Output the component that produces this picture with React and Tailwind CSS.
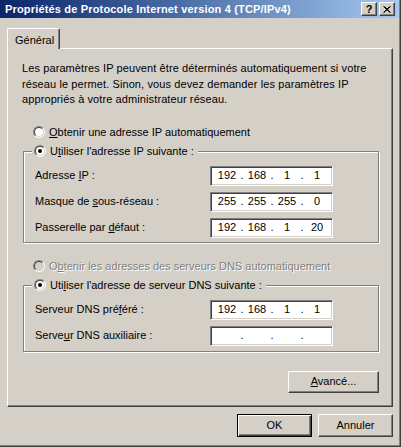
const font = "[font-family:'Liberation_Sans',Arial,sans-serif]";

function Radio({ checked, disabled }) {
  return (
    <span className="w-[12px] h-[12px] shrink-0 rounded-full border border-t-[#808080] border-l-[#808080] border-b-white border-r-white flex items-center justify-center">
      <span className={`w-[10px] h-[10px] rounded-full border border-t-[#404040] border-l-[#404040] border-b-[#d4d0c8] border-r-[#d4d0c8] flex items-center justify-center ${disabled ? "bg-[#d4d0c8]" : "bg-white"}`}>
        {checked && <span className="w-[4px] h-[4px] rounded-full bg-black" />}
      </span>
    </span>
  );
}

function IpBox({ parts }) {
  return (
    <div className="w-[123px] h-[20px] bg-white border border-t-[#808080] border-l-[#808080] border-b-white border-r-white shadow-[inset_1px_1px_0_#404040,inset_-1px_-1px_0_#d4d0c8] flex items-center pl-[5px] text-[11px] text-black">
      {parts.map((p, i) => (
        <div key={i} className="flex">
          <span className="w-[22px] text-center">{p}</span>
          {i < 3 && <span className="w-[8px] text-center">.</span>}
        </div>
      ))}
    </div>
  );
}

function Row({ label, parts }) {
  return (
    <div className="flex items-center h-[20px]">
      <span className="w-[175px]">{label}</span>
      <IpBox parts={parts} />
    </div>
  );
}

function Button({ children, w = "w-[75px]", h = "h-[23px]", isDefault }) {
  return (
    <div className={`${w} ${h} flex items-center justify-center bg-[#d4d0c8] ${isDefault ? "border border-black shadow-[inset_1px_1px_0_#fff,inset_-1px_-1px_0_#404040,inset_-2px_-2px_0_#808080]" : "border border-t-white border-l-white border-b-[#404040] border-r-[#404040] shadow-[inset_-1px_-1px_0_#808080]"}`}>
      {children}
    </div>
  );
}

function GroupBox({ legend, children, h }) {
  return (
    <div className={`relative ml-[15px] w-[356px] ${h} border border-[#808080] shadow-[1px_1px_0_#fff,inset_1px_1px_0_#fff]`}>
      <div className="absolute left-[8px] -top-[7px] h-[13px] flex items-center gap-[4px] bg-[#d4d0c8] px-[2px] pr-[4px]">
        <Radio checked />
        <span>{legend}</span>
      </div>
      <div className="pt-[14px] pl-[11px] flex flex-col gap-[6px]">{children}</div>
    </div>
  );
}

export default function App() {
  return (
    <div className={`w-[401px] h-[447px] bg-[#d4d0c8] border-r border-b border-[#404040] shadow-[inset_-1px_-1px_0_#808080] flex flex-col text-[11px] text-black ${font}`}>
      {/* TITLE BAR */}
      <div className="h-[18px] w-[399px] bg-gradient-to-r from-[#0a246a] to-[#a6caf0] flex items-center justify-between">
        <span className="pl-[5px] font-bold text-white text-[11px] tracking-[0.17px]">Propriétés de Protocole Internet version 4 (TCP/IPv4)</span>
        <div className="flex gap-[2px] mr-[4px]">
          <div className="w-[16px] h-[14px] bg-[#d4d0c8] border border-t-white border-l-white border-b-[#404040] border-r-[#404040] shadow-[inset_-1px_-1px_0_#808080] flex items-center justify-center font-bold text-[11px] leading-none">?</div>
          <div className="w-[16px] h-[14px] bg-[#d4d0c8] border border-t-white border-l-white border-b-[#404040] border-r-[#404040] shadow-[inset_-1px_-1px_0_#808080] flex items-center justify-center">
            <svg width="8" height="7" viewBox="0 0 8 7">
              <path d="M0.5 0.5 L7 6.5 M7.5 0.5 L1 6.5 M1.5 0.5 L7.5 6.5 M6.5 0.5 L0.5 6.5" stroke="#000" strokeWidth="1" />
            </svg>
          </div>
        </div>
      </div>

      {/* TAB */}
      <div className="mt-[10px] ml-[7px] relative z-10 -mb-px w-[53px] h-[21px] bg-[#d4d0c8] border-t border-l border-white rounded-tl-[2px] rounded-tr-[2px] border-r border-r-[#404040] shadow-[inset_-1px_0_0_#808080] pl-[7px] pt-[3px]">
        Général
      </div>

      {/* PANEL */}
      <div className="ml-[7px] w-[386px] h-[359px] border-t border-l border-white border-r border-b border-r-[#404040] border-b-[#404040] shadow-[inset_-1px_-1px_0_#808080] flex flex-col">
        <p className="pt-[12px] pl-[14px] leading-[15.5px] tracking-[0.1px]">
          Les paramètres IP peuvent être déterminés automatiquement si votre<br />
          réseau le permet. Sinon, vous devez demander les paramètres IP<br />
          appropriés à votre administrateur réseau.
        </p>

        <div className="mt-[18px] ml-[25px] h-[13px] flex items-center gap-[4px]">
          <Radio />
          <span><u>O</u>btenir une adresse IP automatiquement</span>
        </div>

        <div className="mt-[12px]">
          <GroupBox h="h-[92px]" legend={<>U<u>t</u>iliser l'adresse IP suivante :</>}>
            <Row label={<>Adresse <u>I</u>P :</>} parts={["192", "168", "1", "1"]} />
            <Row label={<>Masque de <u>s</u>ous-réseau :</>} parts={["255", "255", "255", "0"]} />
            <Row label={<>Passerelle par <u>d</u>éfaut :</>} parts={["192", "168", "1", "20"]} />
          </GroupBox>
        </div>

        <div className="mt-[17px] ml-[25px] h-[13px] flex items-center gap-[4px]">
          <Radio disabled />
          <span className="text-[#808080] [text-shadow:1px_1px_0_#fff]">O<u>b</u>tenir les adresses des serveurs DNS automatiquement</span>
        </div>

        <div className="mt-[12px]">
          <GroupBox h="h-[67px]" legend={<>Uti<u>l</u>iser l'adresse de serveur DNS suivante :</>}>
            <Row label={<>Serveur DNS pré<u>f</u>éré :</>} parts={["192", "168", "1", "1"]} />
            <Row label={<>Serve<u>u</u>r DNS auxiliaire :</>} parts={["", "", "", ""]} />
          </GroupBox>
        </div>

        <div className="mt-[19px] ml-[280px]">
          <Button w="w-[91px]" h="h-[22px]"><span><u>A</u>vancé...</span></Button>
        </div>
      </div>

      {/* BOTTOM BUTTONS */}
      <div className="mt-[7px] flex justify-end gap-[6px] pr-[7px]">
        <Button isDefault>OK</Button>
        <Button>Annuler</Button>
      </div>
    </div>
  );
}
